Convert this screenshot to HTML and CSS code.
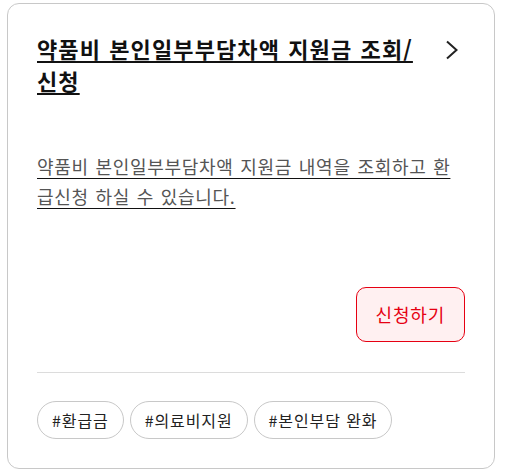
FILE: index.html
```html
<!DOCTYPE html>
<html lang="ko">
<head>
    <meta charset="UTF-8">
    <meta name="viewport" content="width=device-width, initial-scale=1.0">
    <title>약품비 본인일부부담차액 지원금 조회/신청</title>
    <link rel="stylesheet" href="styles.css">
</head>
<body>
    <div class="card">
        <div class="card-head">
            <a href="#" class="card-title">약품비 본인일부부담차액 지원금 조회/신청</a>
            <svg class="chevron" width="14" height="20" viewBox="0 0 14 20" aria-hidden="true">
                <path d="M2 1.5 L11.5 10 L2 18.5" fill="none" stroke="#222" stroke-width="2"/>
            </svg>
        </div>

        <a href="#" class="card-desc">약품비 본인일부부담차액 지원금 내역을 조회하고 환급신청 하실 수 있습니다.</a>

        <div class="card-actions">
            <button class="btn-apply">신청하기</button>
        </div>

        <div class="tags">
            <span class="tag">#환급금</span>
            <span class="tag">#의료비지원</span>
            <span class="tag">#본인부담 완화</span>
        </div>
    </div>
</body>
</html>
```

FILE: styles.css
```css
* {
    box-sizing: border-box;
    margin: 0;
    padding: 0;
}

body {
    font-family: "Noto Sans CJK KR", "Noto Sans", sans-serif;
    background: #fff;
    color: #222;
    padding: 3px 10px 3px 7px;
}

.card {
    border: 1px solid #c8c8c8;
    border-radius: 12px;
    padding: 28px 29px 29px 29px;
}

.card-head {
    display: flex;
    align-items: flex-start;
    gap: 20px;
}

.card-title {
    flex: 1;
    font-size: 22px;
    font-weight: 700;
    line-height: 32px;
    letter-spacing: 1.1px;
    word-spacing: 1px;
    color: #111;
    text-decoration: underline;
    text-underline-offset: 3px;
}

.chevron {
    margin-top: 8px;
    margin-right: 6px;
    flex-shrink: 0;
}

.card-desc {
    display: block;
    margin-top: 55px;
    font-size: 18px;
    line-height: 30px;
    letter-spacing: 0.7px;
    word-spacing: 1px;
    color: #555;
    text-decoration: underline;
    text-decoration-color: #111;
    text-underline-offset: 4px;
}

.card-actions {
    display: flex;
    justify-content: flex-end;
    margin-top: 76px;
    padding-bottom: 30px;
    border-bottom: 1px solid #dcdcdc;
}

.btn-apply {
    font-family: inherit;
    font-size: 18px;
    line-height: 25px;
    letter-spacing: 0.8px;
    color: #e60012;
    background: #fff0f1;
    border: 1px solid #e60012;
    border-radius: 10px;
    padding: 14px 19px;
    cursor: pointer;
}

.tags {
    display: flex;
    gap: 6px;
    margin-top: 28px;
}

.tag {
    font-size: 16px;
    line-height: 24px;
    letter-spacing: 0.9px;
    color: #222;
    border: 1px solid #c8c8c8;
    border-radius: 20px;
    padding: 6px 14px;
}
```
